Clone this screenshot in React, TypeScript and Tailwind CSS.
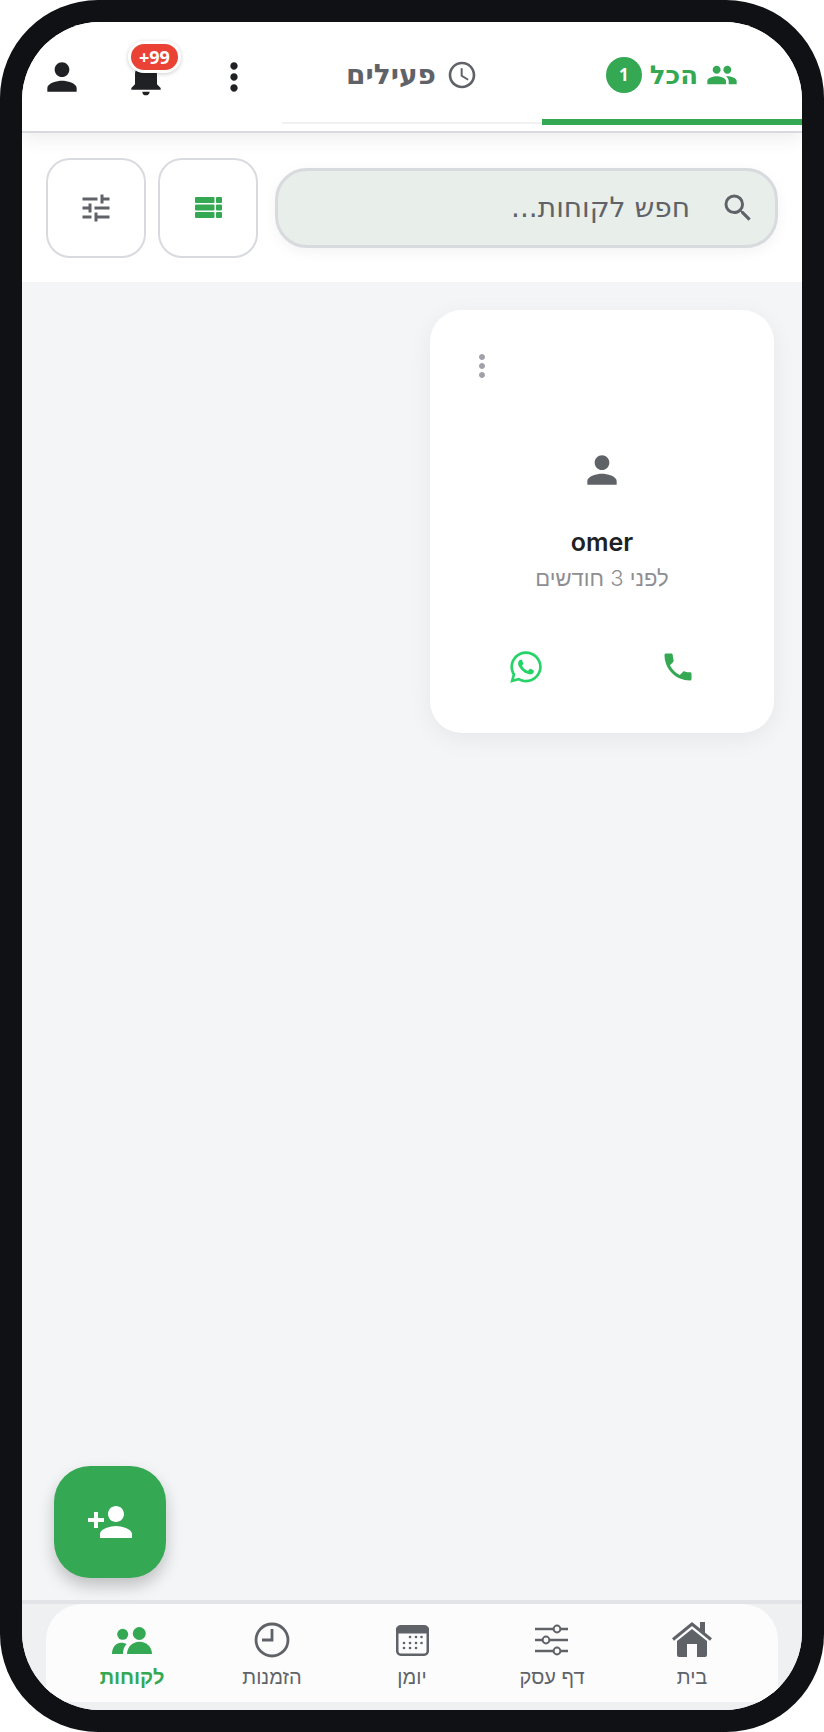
import { FaWhatsapp } from "react-icons/fa";
import {
  MdAccessTime,
  MdMoreVert,
  MdNotifications,
  MdPeople,
  MdPerson,
  MdPersonAdd,
  MdPhone,
  MdSearch,
  MdTune,
} from "react-icons/md";

function HomeIcon() {
  return (
    <svg width="40" height="36" viewBox="0 0 40 36" fill="#5f6368">
      <path d="M28 0h5v13l-5-4z" />
      <path d="M1 17.500 20 2l19 15.500" fill="none" stroke="#5f6368" strokeWidth="3" />
      <path d="M5 19 20 7l15 12v14a2 2 0 0 1-2 2h-8V22H15v13H7a2 2 0 0 1-2-2z" />
    </svg>
  );
}

function SlidersIcon() {
  return (
    <svg width="36" height="36" viewBox="0 0 36 36" fill="none" stroke="#5f6368" strokeWidth="2.400">
      <path d="M1 7h33M1 18h33M1 29h33" />
      <circle cx="23" cy="7" r="3.400" fill="#fcfcfd" strokeWidth="2" />
      <circle cx="12" cy="18" r="3.400" fill="#fcfcfd" strokeWidth="2" />
      <circle cx="23" cy="29" r="3.400" fill="#fcfcfd" strokeWidth="2" />
    </svg>
  );
}

function CalendarIcon() {
  return (
    <svg width="33" height="31" viewBox="0 0 33 31">
      <rect x="1.250" y="1.250" width="30.500" height="28.500" rx="3.500" fill="none" stroke="#5f6368" strokeWidth="2.500" />
      <path d="M0 5a4 4 0 0 1 4-4h25a4 4 0 0 1 4 4v3.500H0z" fill="#5f6368" />
      {[
        [14, 12], [20, 12], [25.500, 12],
        [8, 18], [14, 18], [20, 18], [25.500, 18],
        [8, 23], [14, 23], [20, 23],
      ].map(([x, y]) => (
        <circle key={`${x}-${y}`} cx={x} cy={y} r="1.300" fill="#5f6368" />
      ))}
    </svg>
  );
}

function ClockIcon() {
  return (
    <svg width="36" height="36" viewBox="0 0 36 36" fill="none" stroke="#5f6368" strokeWidth="2.800">
      <circle cx="18" cy="18" r="16" />
      <path d="M18 7v11H8" />
    </svg>
  );
}

function PeopleIcon() {
  return (
    <svg width="40" height="27" viewBox="0 0 40 27" fill="#34a853">
      <circle cx="10.700" cy="7.300" r="5.500" />
      <circle cx="27.300" cy="6.500" r="6.500" />
      <path d="M0 27c0-6.500 3.500-11 9-11.300 2.500 0 4.500.5 5.500 1.500C12 19.500 11 23 11 27z" />
      <path d="M15 27c0-7 5.500-12.300 12.500-12.300S40 20 40 27z" />
    </svg>
  );
}

function RowsIcon() {
  return (
    <svg width="27" height="21" viewBox="0 0 27 21" fill="#34a853">
      {[0, 7.500, 15].map((y) => (
        <g key={y}>
          <rect x="0" y={y} width="19.500" height="6" rx="1" />
          <rect x="21" y={y} width="6" height="6" rx="1" />
        </g>
      ))}
    </svg>
  );
}

const navItems = [
  { label: "בית", icon: <HomeIcon /> },
  { label: "דף עסק", icon: <SlidersIcon /> },
  { label: "יומן", icon: <CalendarIcon /> },
  { label: "הזמנות", icon: <ClockIcon /> },
  { label: "לקוחות", icon: <PeopleIcon />, active: true },
];

export default function App() {
  return (
    <div
      dir="rtl"
      className="h-[1732px] w-[824px] overflow-hidden rounded-[98px] bg-[#0f1115] p-[22px] font-['Inter',sans-serif]"
    >
      <div className="relative flex h-full flex-col overflow-hidden rounded-[78px] bg-[#f4f5f7]">
        {/* Tabs */}
        <header className="relative z-10 flex h-[111px] shrink-0 border-b-2 border-[#d8d9dd] bg-white shadow-[0_6px_18px_rgba(0,0,0,0.07)]">
          <div className="flex h-[103px] w-[260px] items-center justify-center gap-[8px] border-b-[6px] border-[#34a853] pt-[9px] text-[#34a853]">
            <MdPeople size={32} />
            <span className="font-['DejaVu_Sans',sans-serif] text-[26px] leading-none font-bold">הכל</span>
            <span className="flex h-9 w-9 items-center justify-center rounded-full bg-[#34a853] font-['Open_Sans',sans-serif] text-[17px] font-bold text-white">1</span>
          </div>
          <div className="h-[102px] w-[260px]">
            <div className="flex h-full items-center justify-center gap-[10px] border-b-2 border-[#f0f1f3] pt-[6px] text-[#5f6368]">
              <MdAccessTime size={32} />
              <span className="font-['DejaVu_Sans',sans-serif] text-[28px] leading-none font-bold">פעילים</span>
            </div>
          </div>
          <div className="flex h-[110px] w-[260px] items-center pr-[4px] text-[#202124]">
            <div className="flex w-[88px] justify-center"><MdMoreVert size={44} /></div>
            <div className="relative flex w-[88px] justify-center">
              <MdNotifications size={44} />
              <span className="absolute top-[-14px] left-[26px] rounded-full border-[3px] border-white bg-[#ea4335] px-[8px] font-['Open_Sans',sans-serif] text-[18px] leading-[26px] font-bold text-white shadow-[0_1px_4px_rgba(0,0,0,0.2)]">
                <span dir="ltr">+99</span>
              </span>
            </div>
            <div className="flex w-[80px] justify-center"><MdPerson size={44} /></div>
          </div>
        </header>

        {/* Search row */}
        <div className="flex h-[149px] shrink-0 items-center bg-white px-[24px]">
          <div className="ml-[17px] flex h-[80px] flex-1 items-center gap-[30px] rounded-[32px] border-[3px] border-[#d8dade] bg-[#e8eeea] pr-[19px] text-[#5f6368] shadow-[0_4px_14px_rgba(0,0,0,0.05)]">
            <MdSearch size={36} />
            <span className="font-['DejaVu_Sans',sans-serif] text-[28px] leading-none">חפש לקוחות...</span>
          </div>
          <button className="ml-[12px] flex h-[100px] w-[100px] items-center justify-center rounded-[24px] border-2 border-[#d8dade] bg-white">
            <RowsIcon />
          </button>
          <button className="flex h-[100px] w-[100px] items-center justify-center rounded-[24px] border-2 border-[#d8dade] bg-white">
            <MdTune size={36} color="#5f6368" />
          </button>
        </div>

        {/* Customer list */}
        <main className="min-h-0 flex-1 pt-[28px] pr-[28px]">
          <article className="flex h-[423px] w-[344px] flex-col rounded-[32px] bg-white shadow-[0_6px_24px_rgba(0,0,0,0.06)]">
            <div className="flex justify-end pt-[38px] pl-[34px] text-[#a1a1aa]">
              <MdMoreVert size={36} />
            </div>
            <div className="flex justify-center pt-[64px] text-[#5f6368]">
              <MdPerson size={44} />
            </div>
            <h2 className="pt-[34px] text-center text-[25px] leading-[32px] font-semibold text-[#202124]">omer</h2>
            <p className="pt-[6px] text-center font-['Inter','DejaVu_Sans',sans-serif] text-[22px] leading-[28px] font-light text-[#8e8e93]">לפני 3 חודשים</p>
            <div className="flex items-center justify-between pt-[57px] pr-[78px] pl-[78px]">
              <MdPhone size={36} color="#34a853" />
              <FaWhatsapp size={36} color="#25d366" />
            </div>
          </article>
        </main>

        <button className="absolute bottom-[132px] left-[32px] flex h-[112px] w-[112px] items-center justify-center rounded-[36px] bg-[#34a853] text-white shadow-[0_8px_16px_rgba(0,0,0,0.22)]">
          <MdPersonAdd size={48} />
        </button>

        {/* Bottom navigation */}
        <div className="shrink-0 border-t-4 border-[#e3e4e7] bg-[#eff0f2] px-[24px] pb-[8px]">
          <nav className="flex h-[98px] rounded-t-[36px] bg-[#fcfcfd] px-[16px]">
            {navItems.map((item) => (
              <div key={item.label} className="flex w-[140px] flex-col items-center justify-end gap-[4px] pb-[12px]">
                <div className="flex h-[40px] items-center">{item.icon}</div>
                <span className={`text-[20px] leading-[26px] ${item.active ? "font-bold text-[#34a853]" : "text-[#5f6368]"}`}>
                  {item.label}
                </span>
              </div>
            ))}
          </nav>
        </div>
      </div>
    </div>
  );
}
